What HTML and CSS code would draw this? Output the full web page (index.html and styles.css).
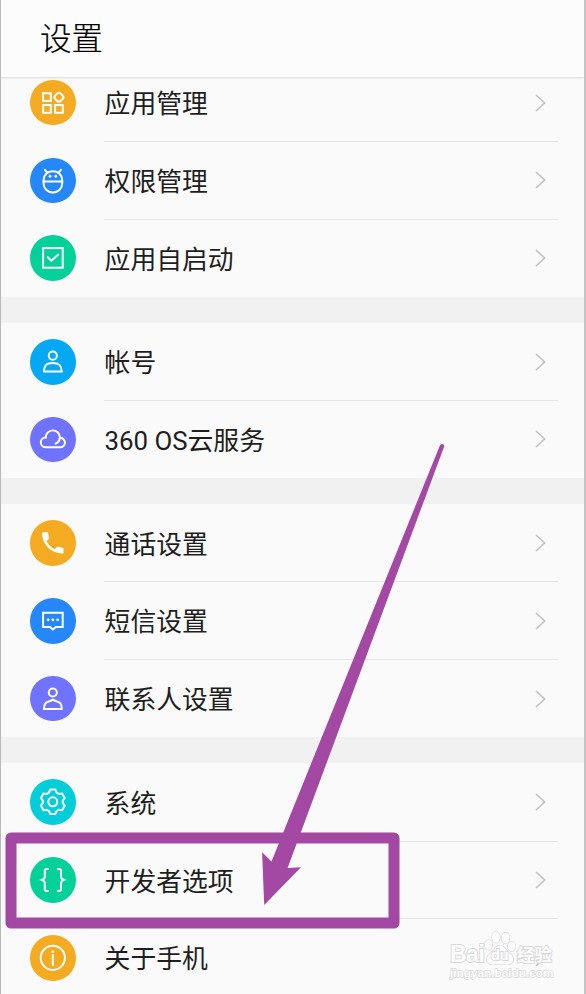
FILE: index.html
```html
<!DOCTYPE html>
<html lang="zh-CN">

<head>
    <meta charset="UTF-8">
    <meta name="viewport" content="width=device-width, initial-scale=1.0">
    <title>设置</title>
    <link rel="stylesheet" href="styles.css">
</head>

<body>
    <div class="phone">
        <header>
            <h1>设置</h1>
        </header>

        <main>
            <section class="group">
                <div class="item">
                    <span class="icon orange">
                        <svg viewBox="-23 -23 46 46">
                            <rect x="-9.8" y="-9.7" width="7.8" height="7.8" />
                            <rect x="-9.8" y="2.3" width="7.8" height="7.8" />
                            <rect x="2.3" y="2.3" width="7.8" height="7.8" />
                            <rect x="2.3" y="-9.5" width="7.8" height="7.8" rx="2.7" transform="rotate(45 6.2 -5.6)" />
                        </svg>
                    </span>
                    <div class="label">应用管理</div>
                    <svg class="arrow" viewBox="0 0 11 18"><path d="M1 1l8.6 8L1 17" /></svg>
                </div>
                <div class="item">
                    <span class="icon blue">
                        <svg viewBox="-23 -23 46 46">
                            <rect x="-9.3" y="-9.7" width="18.8" height="21.4" rx="9" />
                            <path d="M-9.3 .8H9.5M-8-11.1l2.6 3.2M8.2-11.1L5.6-7.9" />
                            <circle class="fill" cx="-2.8" cy="-4.6" r="1.4" />
                            <circle class="fill" cx="3" cy="-4.6" r="1.4" />
                        </svg>
                    </span>
                    <div class="label">权限管理</div>
                    <svg class="arrow" viewBox="0 0 11 18"><path d="M1 1l8.6 8L1 17" /></svg>
                </div>
                <div class="item">
                    <span class="icon green">
                        <svg viewBox="-23 -23 46 46">
                            <rect x="-9.8" y="-9.8" width="19.8" height="19.8" />
                            <path d="M-5-.5l3.5 3.5L5.4-3.2" />
                        </svg>
                    </span>
                    <div class="label">应用自启动</div>
                    <svg class="arrow" viewBox="0 0 11 18"><path d="M1 1l8.6 8L1 17" /></svg>
                </div>
            </section>

            <section class="group">
                <div class="item">
                    <span class="icon sky">
                        <svg viewBox="-23 -23 46 46">
                            <circle cx="0" cy="-6.2" r="4.1" />
                            <path d="M-8.9 9.8H9C8.8 3.4 6.2 1.2 0 1.2S-8.6 3.4-8.9 9.8z" />
                        </svg>
                    </span>
                    <div class="label">帐号</div>
                    <svg class="arrow" viewBox="0 0 11 18"><path d="M1 1l8.6 8L1 17" /></svg>
                </div>
                <div class="item">
                    <span class="icon purple">
                        <svg viewBox="-23 -23 46 46">
                            <path d="M2.9 3.9C5.4 2.8 7.1.2 7.1-2.6A7.1 7.1 0 0 0-7.1-2.2A4.8 4.8 0 0 0-7.4 7.5H7.9A4.75 4.75 0 0 0 7.1-2" />
                        </svg>
                    </span>
                    <div class="label">360 OS云服务</div>
                    <svg class="arrow" viewBox="0 0 11 18"><path d="M1 1l8.6 8L1 17" /></svg>
                </div>
            </section>

            <section class="group">
                <div class="item">
                    <span class="icon orange">
                        <svg viewBox="-23 -23 46 46">
                            <path class="fill" d="M-10.2-10.4L-5.6-10.8Q-4.8-10.8-4.7-10L-3.6-4.3L-6.3-1.8C-4.6 1.8-1.8 4.8 1.8 6.6L4.2 4.3Q4.6 3.9 5.2 4L10.1 5.1Q10.8 5.3 10.8 6V10Q10.8 10.8 10 10.8C-1.8 10.8-10.9 1.2-10.8-9.6Q-10.8-10.3-10.2-10.4z" />
                        </svg>
                    </span>
                    <div class="label">通话设置</div>
                    <svg class="arrow" viewBox="0 0 11 18"><path d="M1 1l8.6 8L1 17" /></svg>
                </div>
                <div class="item">
                    <span class="icon blue">
                        <svg viewBox="-23 -23 46 46">
                            <path d="M-9.8-8.2H10V6.2H3L.1 8.8L-2.8 6.2H-9.8z" />
                            <circle class="fill" cx="-4.7" cy="-1" r="1.4" />
                            <circle class="fill" cx=".1" cy="-1" r="1.4" />
                            <circle class="fill" cx="4.9" cy="-1" r="1.4" />
                        </svg>
                    </span>
                    <div class="label">短信设置</div>
                    <svg class="arrow" viewBox="0 0 11 18"><path d="M1 1l8.6 8L1 17" /></svg>
                </div>
                <div class="item">
                    <span class="icon purple">
                        <svg viewBox="-23 -23 46 46">
                            <circle cx="0" cy="-6.4" r="4.1" />
                            <path d="M-8.9 10.2H9.1C9.1 7.4 8.8 5.9 7.7 4.6C6.2 3 2.8 2.6 .1 .8C-2.6 2.6-6 3-7.5 4.6C-8.6 5.9-8.9 7.4-8.9 10.2z" />
                        </svg>
                    </span>
                    <div class="label">联系人设置</div>
                    <svg class="arrow" viewBox="0 0 11 18"><path d="M1 1l8.6 8L1 17" /></svg>
                </div>
            </section>

            <section class="group">
                <div class="item">
                    <span class="icon cyan">
                        <svg viewBox="-23 -23 46 46">
                            <path d="M-2.6-12.3H2.6L3.8-9.4L6.1-8L9.4-8.4L12-3.8L10.1-1.3V1.3L12 3.8L9.4 8.4L6.1 8L3.8 9.4L2.6 12.3H-2.6L-3.8 9.4L-6.1 8L-9.4 8.4L-12 3.8L-10.1 1.3V-1.3L-12-3.8L-9.4-8.4L-6.1-8L-3.8-9.4z" />
                            <circle cx="0" cy="0" r="4.5" />
                        </svg>
                    </span>
                    <div class="label">系统</div>
                    <svg class="arrow" viewBox="0 0 11 18"><path d="M1 1l8.6 8L1 17" /></svg>
                </div>
                <div class="item">
                    <span class="icon green">
                        <svg viewBox="-23 -23 46 46">
                            <path d="M-4.9-11H-6.2Q-8.1-11-8.1-9V-3.2Q-8.1-.9-10.9 .1Q-8.1 1.1-8.1 3.4V9.4Q-8.1 11.4-6.2 11.4H-4.9" />
                            <path d="M5.1-11H6.4Q8.3-11 8.3-9V-3.2Q8.3-.9 11.1 .1Q8.3 1.1 8.3 3.4V9.4Q8.3 11.4 6.4 11.4H5.1" />
                        </svg>
                    </span>
                    <div class="label">开发者选项</div>
                    <svg class="arrow" viewBox="0 0 11 18"><path d="M1 1l8.6 8L1 17" /></svg>
                </div>
                <div class="item">
                    <span class="icon orange">
                        <svg viewBox="-23 -23 46 46">
                            <circle cx="0" cy="0" r="12.2" />
                            <circle class="fill" cx="0" cy="-6" r="1.4" />
                            <path d="M0-2.8V7.4" />
                        </svg>
                    </span>
                    <div class="label">关于手机</div>
                    <svg class="arrow" viewBox="0 0 11 18"><path d="M1 1l8.6 8L1 17" /></svg>
                </div>
            </section>
        </main>
    </div>

    <!-- highlight box and pointer over the list -->
    <svg class="mark" viewBox="0 0 586 994">
        <rect x="11" y="838" width="383" height="85" />
        <path d="M440 445.2Q441.6 443 443.6 444.5Q444.5 445.5 444 447L287.6 868L301 867.2L264.2 905L262.1 852.2L271.5 861.4z" />
    </svg>

    <div class="watermark">
        <div class="brand">
            <span class="bai">Bai</span>
            <span class="paw">
                <svg viewBox="0 0 32 36">
                    <ellipse cx="4.5" cy="15" rx="3.8" ry="5.2" />
                    <ellipse cx="12" cy="7.2" rx="4" ry="5.6" />
                    <ellipse cx="21.6" cy="8" rx="4" ry="5.6" />
                    <ellipse cx="27.7" cy="16.5" rx="3.8" ry="4.8" />
                    <path d="M16 15.5C11 15.5 10.5 20.5 6.8 23C3.2 25.5 2 28.5 3 31.2C4.2 34.7 8 34.8 11.5 34.2H20.5C24 34.8 27.8 34.7 29 31.2C30 28.5 28.8 25.5 25.2 23C21.5 20.5 21 15.5 16 15.5z" />
                </svg>
                <span class="du">du</span>
            </span>
            <span class="jy">经验</span>
        </div>
        <div class="site">jingyan.baidu.com</div>
    </div>
</body>

</html>
```
FILE: styles.css
```css
body {
    margin: 0;
    width: 586px;
    height: 994px;
    position: relative;
    overflow: hidden;
    background: #fafafa;
    font-family: Roboto, "Noto Sans CJK SC", sans-serif;
    color: #1e1e1e;
}

.phone {
    box-sizing: border-box;
    height: 994px;
    overflow: hidden;
    border-left: 1px solid #b9b9b9;
    border-right: 2px solid #c4c4c4;
    background: #f1f1f1;
}

header {
    box-sizing: border-box;
    height: 77px;
    padding: 1px 0 0 39px;
    position: relative;
    z-index: 1;
    background: #fcfcfc;
    box-shadow: 0 1px 2px rgba(0, 0, 0, 0.13);
}

h1 {
    margin: 0;
    font-size: 31.5px;
    font-weight: 300;
    line-height: 77px;
    color: #000;
    -webkit-text-stroke: 0.2px #000;
}

/* first row is scrolled a little under the header */
main {
    margin-top: -13.3px;
    display: flex;
    flex-direction: column;
    gap: 25.9px;
}

.group {
    background: #fafafa;
}

.item {
    box-sizing: border-box;
    height: 77.75px;
    padding: 0 38px 0 29px;
    display: flex;
    align-items: center;
    position: relative;
}

.item + .item::before {
    content: "";
    position: absolute;
    top: -0.6px;
    left: 103.4px;
    right: 26px;
    height: 1px;
    background: #e5e5e5;
}

.icon {
    width: 45.6px;
    height: 45.6px;
    flex: none;
    border-radius: 50%;
}

.icon svg {
    display: block;
    width: 100%;
    height: 100%;
    fill: none;
    stroke: #fff;
    stroke-width: 2;
    stroke-linecap: round;
}

.icon .fill {
    fill: #fff;
    stroke: none;
}

.orange {
    background: #f5ab21;
}

.blue {
    background: #2688f8;
}

.green {
    background: #04d199;
}

.sky {
    background: #04a8f3;
}

.purple {
    background: #7073ff;
}

.cyan {
    background: #02ceda;
}

.label {
    flex: 1;
    margin-left: 29px;
    padding-top: 3px;
    font-size: 25.8px;
    line-height: 40px;
}

.arrow {
    width: 11px;
    height: 18px;
    fill: none;
    stroke: #c2c2c2;
    stroke-width: 1.7;
}

.mark {
    position: absolute;
    top: 0;
    left: 0;
    width: 586px;
    height: 994px;
}

.mark rect {
    fill: none;
    stroke: #a349a4;
    stroke-width: 11;
    stroke-linejoin: round;
}

.mark path {
    fill: #a349a4;
}

.watermark {
    position: absolute;
    left: 450px;
    top: 930px;
    width: 106px;
    font-family: "Liberation Sans", "Noto Sans CJK SC", sans-serif;
    font-weight: bold;
    color: #fcfcfc;
    -webkit-text-stroke: 1.8px #d9d9d9;
    paint-order: stroke fill;
}

.brand {
    display: flex;
    align-items: flex-end;
    height: 36px;
    white-space: nowrap;
}

.bai {
    width: 34px;
    font-size: 23px;
    line-height: 24px;
    letter-spacing: -0.5px;
}

.paw {
    position: relative;
    width: 32px;
    height: 36px;
    margin-right: 1px;
}

.paw svg {
    display: block;
    width: 32px;
    height: 36px;
    fill: #fcfcfc;
    stroke: #d6d6d6;
    stroke-width: 1.2;
}

.du {
    position: absolute;
    left: 7px;
    top: 17px;
    font-size: 14.5px;
    line-height: 17px;
}

.jy {
    font-size: 17.5px;
    line-height: 22px;
}

.site {
    font-size: 11.8px;
    line-height: 14px;
    -webkit-text-stroke-width: 1.3px;
}
```
